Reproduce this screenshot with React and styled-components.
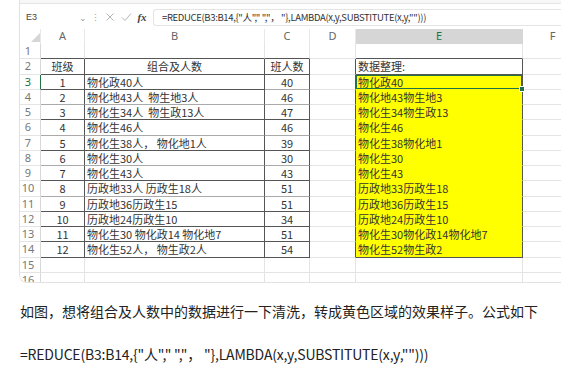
import React from 'react';
import styled, { createGlobalStyle, css } from 'styled-components';

const GlobalStyle = createGlobalStyle`
  body {
    margin: 0;
    background: #fff;
    font-family: "Noto Sans CJK SC", "Noto Sans", sans-serif;
  }
`;

const COLS = [21, 44, 180, 45, 46, 167, 60];
const LETTERS = ['A', 'B', 'C', 'D', 'E', 'F'];
const DARK = '#555';
const MID = '#aaa';
const GRID = '#e4e4e4';
const GREEN = '#217346';

const FORMULA = '=REDUCE(B3:B14,{"人"," ","， "},LAMBDA(x,y,SUBSTITUTE(x,y,"")))';

const rows = [
  ['1', '物化政40人', '40', '物化政40'],
  ['2', '物化地43人  物生地3人', '46', '物化地43物生地3'],
  ['3', '物化生34人  物生政13人', '47', '物化生34物生政13'],
  ['4', '物化生46人', '46', '物化生46'],
  ['5', '物化生38人， 物化地1人', '39', '物化生38物化地1'],
  ['6', '物化生30人', '30', '物化生30'],
  ['7', '物化生43人', '43', '物化生43'],
  ['8', '历政地33人 历政生18人', '51', '历政地33历政生18'],
  ['9', '历政地36历政生15', '51', '历政地36历政生15'],
  ['10', '历政地24历政生10', '34', '历政地24历政生10'],
  ['11', '物化生30 物化政14 物化地7', '51', '物化生30物化政14物化地7'],
  ['12', '物化生52人， 物生政2人', '54', '物化生52物生政2'],
];

// rows whose bottom line in A:C is the dark table rule
const darkBottom = [1, 2, 3, 5, 7, 9, 11, 12, 13, 14];

const Page = styled.div`
  padding-left: 20px;
  width: 541px;
`;

const Shot = styled.div`
  height: 283px;
  box-sizing: border-box;
  border-left: 1px solid #e2e2e2;
  border-bottom: 1px solid #e2e2e2;
  border-bottom-left-radius: 8px;
  overflow: hidden;
  margin-left: -1px;
`;

const TopBand = styled.div`
  height: 3px;
  border-bottom: 1px solid #e6e6e6;
  background: #f7f7f7;
`;

const FormulaBar = styled.div`
  display: flex;
  align-items: center;
  height: 16px;
  margin: 5px 0 4px;
  font-size: 9.5px;
  color: #333;
`;

const NameBox = styled.div`
  width: 52px;
  padding-left: 6px;
  font-family: "Liberation Sans", sans-serif;
  font-size: 9px;
  color: #444;
`;

const BarIcon = styled.span`
  display: inline-flex;
  align-items: center;
  justify-content: center;
  width: ${(p) => p.$w || 12}px;
  color: ${(p) => p.$color || '#999'};
  font-size: ${(p) => p.$size || 10}px;
`;

const Fx = styled.span`
  font-family: "Liberation Serif", serif;
  font-style: italic;
  font-weight: bold;
  font-size: 11px;
  color: #444;
  width: 16px;
  text-align: center;
`;

const FormulaInput = styled.div`
  flex: 1;
  height: 15px;
  margin-left: 3px;
  border: 1px solid #e4e4e4;
  border-right: none;
  border-radius: 3px 0 0 3px;
  display: flex;
  align-items: center;
  padding-left: 8px;
  white-space: pre;
  letter-spacing: -0.35px;
`;

const Row = styled.div`
  display: grid;
  grid-template-columns: ${COLS.map((c) => c + 'px').join(' ')};
  height: ${(p) => p.$h || 15.25}px;
`;

const Cell = styled.div`
  position: relative;
  box-sizing: border-box;
  border-right: 1px solid ${(p) => p.$right || GRID};
  border-bottom: 1px solid ${(p) => p.$bottom || GRID};
  background: ${(p) => p.$bg || '#fff'};
  font-size: 11px;
  line-height: 14px;
  color: #333;
  white-space: pre;
  overflow: visible;
  text-align: ${(p) => p.$align || 'left'};
  padding: 0 2px;
  ${(p) =>
    p.$selected &&
    css`
      box-shadow: inset 0 0 0 1px ${GREEN};
      &::after {
        content: '';
        position: absolute;
        right: -3px;
        bottom: -3px;
        width: 4px;
        height: 4px;
        background: ${GREEN};
        border: 1px solid #fff;
        z-index: 2;
      }
    `}
`;

const HeadCell = styled(Cell)`
  color: ${(p) => (p.$active ? GREEN : '#666')};
  background: ${(p) => (p.$active ? '#d6d6d6' : '#fff')};
  border-bottom: ${(p) => (p.$active ? `2px solid ${GREEN}` : `1px solid #d8d8d8`)};
  border-right: 1px solid ${(p) => (p.$active ? '#d6d6d6' : '#e8e8e8')};
  text-align: center;
  font-family: "Noto Sans", sans-serif;
  font-size: 11px;
`;

const NumCell = styled(Cell)`
  color: ${(p) => (p.$active ? GREEN : '#777')};
  border-right: 1px solid ${(p) => (p.$active ? GREEN : '#d8d8d8')};
  text-align: center;
  padding: 0 4px 0 0;
  font-family: "Noto Sans", sans-serif;
`;

const Note = styled.p`
  margin: ${(p) => p.$top}px 0 0;
  font-size: 14px;
  line-height: 20px;
  color: #222;
  white-space: pre;
  letter-spacing: ${(p) => p.$tight ? '-0.2px' : '0'};
`;

const Corner = () => (
  <svg width="21" height="15" viewBox="0 0 21 15">
    <polygon points="18,4 18,13 9,13" fill="#d6d6d6" />
  </svg>
);

const App = () => {
  const rowCount = 16;
  const lines = [];
  for (let r = 1; r <= rowCount; r++) {
    const data = r >= 3 && r <= 14 ? rows[r - 3] : null;
    const inTable = r >= 2 && r <= 14;
    const abBottom = darkBottom.includes(r) ? DARK : inTable ? MID : GRID;
    const cBottom = r === 3 ? MID : abBottom;
    let a = '', b = '', c = '', e = '';
    if (r === 2) {
      a = '班级';
      b = '组合及人数';
      c = '班人数';
      e = '数据整理:';
    } else if (data) {
      [a, b, c, e] = data;
    }
    const yellow = r >= 3 && r <= 14;
    const eBottom = r === 1 || r === 2 || r === 14 ? DARK : yellow ? '#ffff00' : GRID;
    lines.push(
      <Row key={r}>
        <NumCell $active={r === 3}>{r}</NumCell>
        <Cell $align="center" $right={inTable ? DARK : GRID} $bottom={abBottom}>{a}</Cell>
        <Cell $align={r === 2 ? 'center' : 'left'} $right={inTable ? DARK : GRID} $bottom={abBottom}>{b}</Cell>
        <Cell $align="center" $right={inTable ? DARK : GRID} $bottom={cBottom}>{c}</Cell>
        <Cell $right={inTable ? DARK : GRID} />
        <Cell
          $bg={yellow ? '#ffff00' : '#fff'}
          $right={inTable ? DARK : GRID}
          $bottom={eBottom}
          $selected={r === 3}
        >
          {e}
        </Cell>
        <Cell />
      </Row>
    );
  }

  return (
    <>
      <GlobalStyle />
      <Page>
        <Shot>
          <TopBand />
          <FormulaBar>
            <NameBox>E3</NameBox>
            <BarIcon $w={10} $size={9}>⌄</BarIcon>
            <BarIcon $w={14} $size={9}>⋮</BarIcon>
            <BarIcon $w={16} $color="#bbb">
              <svg width="10" height="10" viewBox="0 0 10 10">
                <path d="M1.5 1.5 L8.5 8.5 M8.5 1.5 L1.5 8.5" stroke="#b5b5b5" strokeWidth="1" fill="none" />
              </svg>
            </BarIcon>
            <BarIcon $w={16}>
              <svg width="11" height="10" viewBox="0 0 11 10">
                <path d="M1 5.5 L4 8.5 L10 1.5" stroke="#b5b5b5" strokeWidth="1" fill="none" />
              </svg>
            </BarIcon>
            <Fx>fx</Fx>
            <FormulaInput>{FORMULA}</FormulaInput>
          </FormulaBar>
          <Row $h={15}>
            <HeadCell><Corner /></HeadCell>
            {LETTERS.map((l) => (
              <HeadCell key={l} $active={l === 'E'}>{l}</HeadCell>
            ))}
          </Row>
          {lines}
        </Shot>
        <Note $top={18}>如图，想将组合及人数中的数据进行一下清洗，转成黄色区域的效果样子。公式如下</Note>
        <Note $top={23} $tight>{FORMULA}</Note>
      </Page>
    </>
  );
};

export default App;
